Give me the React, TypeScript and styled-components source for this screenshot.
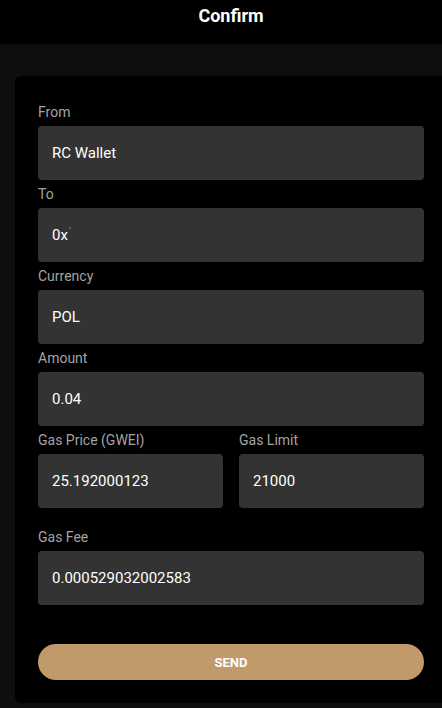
import styled, { createGlobalStyle } from 'styled-components';

const GlobalStyle = createGlobalStyle`
  html, body {
    margin: 0;
    padding: 0;
    background: #0e0e0e;
    overflow: hidden;
  }
  body {
    font-family: Roboto, "Liberation Sans", Arial, sans-serif;
    -webkit-font-smoothing: antialiased;
  }
`;

const Page = styled.div`
  width: 462px;
  min-height: 708px;
  background: #0e0e0e;
`;

const Header = styled.header`
  height: 44px;
  background: #000;
  display: flex;
  justify-content: center;
  padding-top: 4px;
  box-sizing: border-box;
`;

const Title = styled.h1`
  margin: 0;
  color: #fff;
  font-size: 18px;
  font-weight: 700;
  line-height: 24px;
`;

const Content = styled.main`
  padding: 32px 15px 6px;
`;

const Card = styled.section`
  background: #000;
  border-radius: 6px;
  padding: 22px 23px 23px;
  display: flex;
  flex-direction: column;
`;

const Row = styled.div`
  display: grid;
  grid-template-columns: 1fr 1fr;
  gap: 16px;
`;

const Field = styled.div<{ $spaced?: boolean }>`
  display: flex;
  flex-direction: column;
  margin-top: ${(p) => (p.$spaced ? '15px' : '0')};
`;

const Label = styled.label`
  color: #a3a3a3;
  font-size: 14px;
  line-height: 28px;
`;

const Input = styled.div`
  height: 54px;
  background: #333333;
  border-radius: 4px;
  display: flex;
  align-items: center;
  padding: 0 14px;
  color: #fff;
  font-size: 15px;
  font-weight: 400;
`;

const Faint = styled.span`
  color: #8a8f99;
  font-size: 10px;
  align-self: flex-start;
  margin-top: 18px;
  margin-left: 1px;
`;

const SendButton = styled.button`
  margin-top: 39px;
  height: 36px;
  border: none;
  border-radius: 18px;
  background: #c19a6b;
  color: #fff;
  font-family: Roboto, "Liberation Sans", Arial, sans-serif;
  font-size: 13px;
  font-weight: 700;
  cursor: pointer;
`;

const TextField = ({ label, value, spaced }: any) => (
  <Field $spaced={spaced}>
    <Label>{label}</Label>
    <Input>{value}</Input>
  </Field>
);

export default function App() {
  return (
    <Page>
      <GlobalStyle />
      <Header>
        <Title>Confirm</Title>
      </Header>
      <Content>
        <Card>
          <TextField label="From" value="RC Wallet" />
          <TextField
            label="To"
            value={
              <>
                0x<Faint>'</Faint>
              </>
            }
          />
          <TextField label="Currency" value="POL" />
          <TextField label="Amount" value="0.04" />
          <Row>
            <TextField label="Gas Price (GWEI)" value="25.192000123" />
            <TextField label="Gas Limit" value="21000" />
          </Row>
          <TextField label="Gas Fee" value="0.000529032002583" spaced />
          <SendButton>SEND</SendButton>
        </Card>
      </Content>
    </Page>
  );
}
